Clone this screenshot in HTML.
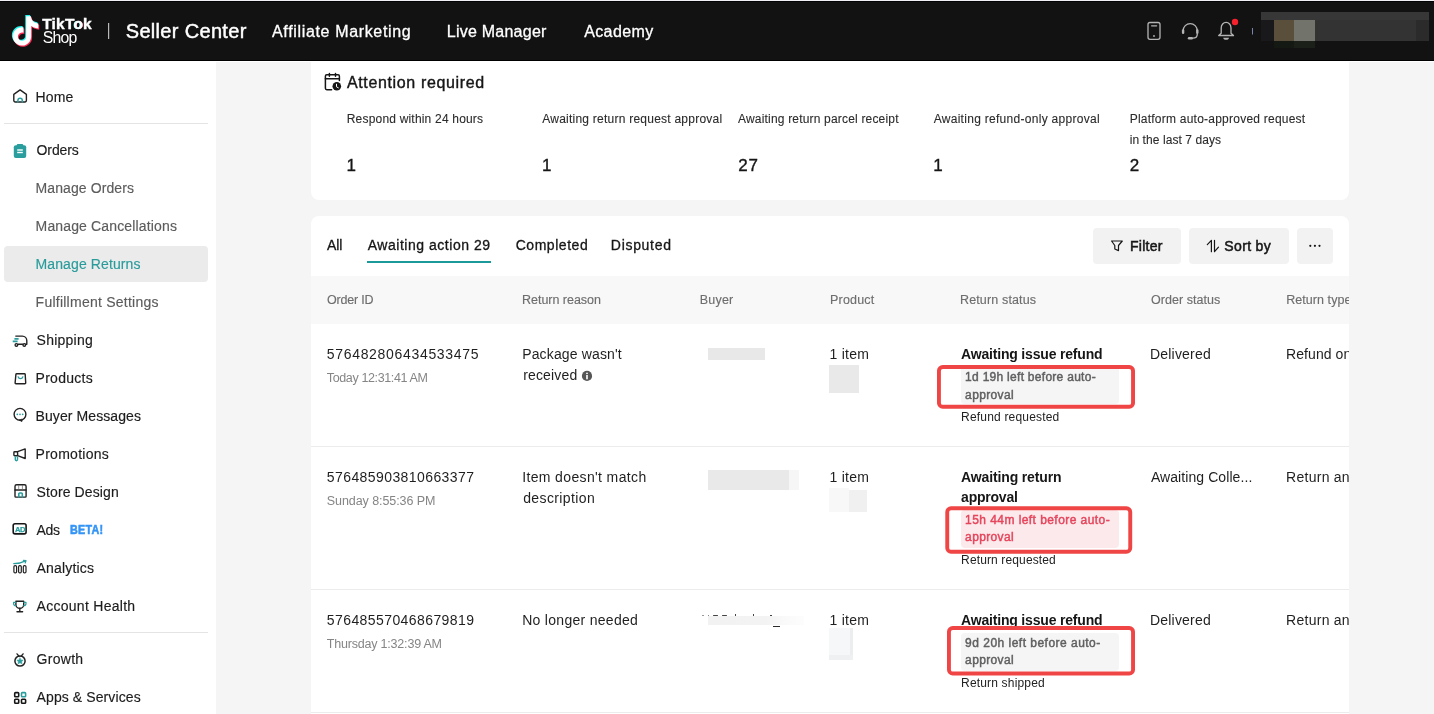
<!DOCTYPE html>
<html lang="en">
<head>
<meta charset="utf-8">
<title>Manage Returns - TikTok Shop Seller Center</title>
<style>
*{box-sizing:border-box;margin:0;padding:0}
html,body{width:1434px;height:714px;overflow:hidden}
body{background:#f5f5f5;font-family:"Liberation Sans",sans-serif;color:#1f1f1f;position:relative;font-size:14px}
.a{position:absolute}
.t{position:absolute;white-space:nowrap;line-height:20px}
#topstrip{left:0;top:0;width:1434px;height:1px;background:#eef0f3}
#header{left:0;top:1px;width:1434px;height:60px;background:#121212;border-top:1px solid #030303;border-bottom:1px solid #000}
#hline{left:0;top:61px;width:1434px;height:1px;background:#fff}
#sidebar{left:0;top:61px;width:216px;height:653px;background:#fff}
.sbdiv{position:absolute;left:4px;width:204px;height:1px;background:#e4e4e4}
#card1{left:310.8px;top:61px;width:1038.7px;height:139px;background:#fff;border-radius:0 0 8px 8px}
#card2{left:310.8px;top:216px;width:1038.7px;height:498px;background:#fff;border-radius:8px 8px 0 0}
#thead{left:310.8px;top:276px;width:1038.7px;height:47.6px;background:#f8f8f8}
.btn{position:absolute;top:228px;height:36px;background:#f2f2f2;border-radius:4px}
.rowline{position:absolute;left:310.8px;width:1038.7px;height:1px;background:#ececec}
.redbox{position:absolute;border:3.5px solid #ef4444;border-radius:6px}
.pill{position:absolute;left:961px;width:158px;height:37.5px;background:#f5f5f5;border-radius:4px}
.pill.red{background:#fce9eb}
svg{position:absolute;left:0;top:0;overflow:visible}
</style>
</head>
<body>
<div id="root" style="position:absolute;left:0;top:0;width:1434px;height:714px;will-change:transform">
<div class="a" id="topstrip"></div>
<div class="a" id="header"></div>
<div class="a" id="hline"></div>
<div class="a" id="sidebar"></div>
<div class="sbdiv" style="top:123px"></div>
<div class="sbdiv" style="top:632px"></div>
<div class="a" style="left:4px;top:246px;width:204px;height:36px;background:#ebebeb;border-radius:4px"></div>
<div class="a" id="card1"></div>
<div class="a" id="card2"></div>
<div class="a" id="thead"></div>
<div class="a" style="left:367.4px;top:261px;width:123.2px;height:2px;background:#1a9a9a"></div>
<div class="btn" style="left:1093px;width:88px"></div>
<div class="btn" style="left:1189px;width:100px"></div>
<div class="btn" style="left:1297px;width:36px"></div>
<div class="rowline" style="top:446px"></div>
<div class="rowline" style="top:589px"></div>
<div class="rowline" style="top:712px"></div>

<!-- blurred placeholders -->
<div class="a" style="left:1261px;top:12px;width:168px;height:29px;background:#333333"></div>
<div class="a" style="left:1261px;top:12px;width:168px;height:8.4px;background:#373737"></div>
<div class="a" style="left:1261px;top:20.4px;width:13px;height:20.6px;background:#19191c"></div>
<div class="a" style="left:1274px;top:20.4px;width:20px;height:20.6px;background:#5a4f3b"></div>
<div class="a" style="left:1294px;top:20.4px;width:20.6px;height:20.6px;background:#72746b"></div>
<div class="a" style="left:1274px;top:41px;width:20px;height:6.7px;background:#151914"></div>
<div class="a" style="left:1294px;top:41px;width:20.6px;height:6.7px;background:#1b2019"></div>
<div class="a" style="left:1416px;top:20.4px;width:13px;height:20.6px;background:#2b2b2b"></div>

<div class="a" style="left:708px;top:348px;width:57px;height:12px;background:#e8e8e8"></div>
<div class="a" style="left:829px;top:365px;width:30px;height:28px;background:#e9e9e9"></div>
<div class="a" style="left:708px;top:470px;width:81px;height:20px;background:#e9e9e9"></div>
<div class="a" style="left:789px;top:470px;width:10px;height:20px;background:#f6f6f6"></div>
<div class="a" style="left:829px;top:488px;width:20px;height:24px;background:#f8f8f8"></div>
<div class="a" style="left:849px;top:490px;width:18px;height:22px;background:#f0f0f0"></div>
<div class="a" style="left:707.6px;top:616px;width:96px;height:9px;background:linear-gradient(90deg,#f2f2f2 0,#f3f3f3 60%,#f9f9f9 78%,#fdfdfd 100%)"></div>
<div class="a" style="left:702px;top:614.6px;width:2px;height:1px;background:#999"></div>
<div class="a" style="left:707.6px;top:614.6px;width:1.4px;height:1px;background:#888"></div>
<div class="a" style="left:713px;top:614.7px;width:4.6px;height:1px;background:#444;border-radius:1px"></div>
<div class="a" style="left:721.6px;top:614.7px;width:5.2px;height:1px;background:#444;border-radius:1px"></div>
<div class="a" style="left:734.6px;top:614.4px;width:1.2px;height:1.4px;background:#444"></div>
<div class="a" style="left:753px;top:614.4px;width:1.2px;height:1.4px;background:#444"></div>
<div class="a" style="left:769.6px;top:614.6px;width:2.8px;height:1.2px;background:#2a2a2a;border-radius:1px"></div>
<div class="a" style="left:773px;top:625.8px;width:7px;height:1.2px;background:#2a2a2a"></div>
<div class="a" style="left:829px;top:628px;width:24px;height:32px;background:#f6f7f9"></div>
<div class="a" style="left:849.6px;top:628px;width:3.4px;height:32px;background:#ecedef"></div>
<div class="a" style="left:829px;top:654.5px;width:24px;height:5.5px;background:#eff0f2"></div>

<!-- pills + annotation boxes -->
<div class="pill" style="top:369.2px;height:34.8px;border-radius:0 0 4px 4px"></div>
<div class="pill red" style="top:510.3px;height:37.4px"></div>
<div class="pill" style="top:633px;height:37.7px"></div>

<div class="t" style="left:125.72px;top:20.87px;font-size:20px;color:#ffffff;letter-spacing:0.324px;-webkit-text-stroke:0.45px #ffffff;">Seller Center</div>
<div class="t" style="left:272.05px;top:21.96px;font-size:16px;color:#ffffff;letter-spacing:0.651px;-webkit-text-stroke:0.3px #ffffff;">Affiliate Marketing</div>
<div class="t" style="left:446.75px;top:21.96px;font-size:16px;color:#ffffff;letter-spacing:0.244px;-webkit-text-stroke:0.3px #ffffff;">Live Manager</div>
<div class="t" style="left:584.15px;top:21.96px;font-size:16px;color:#ffffff;letter-spacing:0.401px;-webkit-text-stroke:0.3px #ffffff;">Academy</div>
<div class="t" style="left:42.80px;top:27.93px;font-size:15.8px;color:#ffffff;letter-spacing:-0.836px;">Shop</div>
<div class="t" style="left:35.58px;top:86.85px;font-size:14px;color:#1c1c1c;letter-spacing:0.097px;-webkit-text-stroke:0.15px #1c1c1c;">Home</div>
<div class="t" style="left:36.58px;top:140.15px;font-size:14px;color:#1c1c1c;letter-spacing:-0.107px;-webkit-text-stroke:0.15px #1c1c1c;">Orders</div>
<div class="t" style="left:35.58px;top:177.85px;font-size:14px;color:#5c5c5c;letter-spacing:0.090px;-webkit-text-stroke:0.15px #5c5c5c;">Manage Orders</div>
<div class="t" style="left:35.58px;top:215.75px;font-size:14px;color:#5c5c5c;letter-spacing:0.148px;-webkit-text-stroke:0.15px #5c5c5c;">Manage Cancellations</div>
<div class="t" style="left:35.58px;top:253.85px;font-size:14px;color:#2a9b9b;letter-spacing:0.104px;-webkit-text-stroke:0.15px #2a9b9b;">Manage Returns</div>
<div class="t" style="left:35.58px;top:291.65px;font-size:14px;color:#5c5c5c;letter-spacing:0.246px;-webkit-text-stroke:0.15px #5c5c5c;">Fulfillment Settings</div>
<div class="t" style="left:36.58px;top:329.75px;font-size:14px;color:#1c1c1c;letter-spacing:0.235px;-webkit-text-stroke:0.15px #1c1c1c;">Shipping</div>
<div class="t" style="left:35.58px;top:367.85px;font-size:14px;color:#1c1c1c;letter-spacing:0.257px;-webkit-text-stroke:0.15px #1c1c1c;">Products</div>
<div class="t" style="left:35.58px;top:405.95px;font-size:14px;color:#1c1c1c;letter-spacing:0.083px;-webkit-text-stroke:0.15px #1c1c1c;">Buyer Messages</div>
<div class="t" style="left:35.58px;top:443.85px;font-size:14px;color:#1c1c1c;letter-spacing:0.271px;-webkit-text-stroke:0.15px #1c1c1c;">Promotions</div>
<div class="t" style="left:36.58px;top:481.95px;font-size:14px;color:#1c1c1c;letter-spacing:0.110px;-webkit-text-stroke:0.15px #1c1c1c;">Store Design</div>
<div class="t" style="left:36.58px;top:519.55px;font-size:14px;color:#1c1c1c;letter-spacing:-0.387px;-webkit-text-stroke:0.15px #1c1c1c;">Ads</div>
<div class="t" style="left:36.58px;top:557.55px;font-size:14px;color:#1c1c1c;letter-spacing:0.179px;-webkit-text-stroke:0.15px #1c1c1c;">Analytics</div>
<div class="t" style="left:36.58px;top:595.85px;font-size:14px;color:#1c1c1c;letter-spacing:0.276px;-webkit-text-stroke:0.15px #1c1c1c;">Account Health</div>
<div class="t" style="left:36.58px;top:648.95px;font-size:14px;color:#1c1c1c;letter-spacing:0.282px;-webkit-text-stroke:0.15px #1c1c1c;">Growth</div>
<div class="t" style="left:36.58px;top:687.05px;font-size:14px;color:#1c1c1c;letter-spacing:0.096px;-webkit-text-stroke:0.15px #1c1c1c;">Apps &amp; Services</div>
<div class="t" style="left:69.50px;top:519.67px;font-size:12.5px;color:#3595f6;font-weight:bold;letter-spacing:0.300px;transform-origin:0 50%;transform:scaleX(0.86);-webkit-text-stroke:0.55px #3595f6;">BETA!</div>
<div class="t" style="left:346.90px;top:72.76px;font-size:16px;color:#161616;letter-spacing:0.647px;-webkit-text-stroke:0.4px #161616;">Attention required</div>
<div class="t" style="left:346.75px;top:108.84px;font-size:12px;color:#2b2b2b;letter-spacing:0.192px;-webkit-text-stroke:0.1px #2b2b2b;">Respond within 24 hours</div>
<div class="t" style="left:542.25px;top:108.84px;font-size:12px;color:#2b2b2b;letter-spacing:0.236px;-webkit-text-stroke:0.1px #2b2b2b;">Awaiting return request approval</div>
<div class="t" style="left:738.05px;top:108.84px;font-size:12px;color:#2b2b2b;letter-spacing:0.181px;-webkit-text-stroke:0.1px #2b2b2b;">Awaiting return parcel receipt</div>
<div class="t" style="left:933.65px;top:108.84px;font-size:12px;color:#2b2b2b;letter-spacing:0.289px;-webkit-text-stroke:0.1px #2b2b2b;">Awaiting refund-only approval</div>
<div class="t" style="left:1129.65px;top:108.84px;font-size:12px;color:#2b2b2b;letter-spacing:0.234px;-webkit-text-stroke:0.1px #2b2b2b;">Platform auto-approved request</div>
<div class="t" style="left:1129.65px;top:129.84px;font-size:12px;color:#2b2b2b;letter-spacing:0.079px;-webkit-text-stroke:0.1px #2b2b2b;">in the last 7 days</div>
<div class="t" style="left:346.38px;top:155.51px;font-size:17px;color:#161616;-webkit-text-stroke:0.35px #161616;">1</div>
<div class="t" style="left:541.88px;top:155.51px;font-size:17px;color:#161616;-webkit-text-stroke:0.35px #161616;">1</div>
<div class="t" style="left:738.17px;top:155.51px;font-size:17px;color:#161616;letter-spacing:0.995px;-webkit-text-stroke:0.35px #161616;">27</div>
<div class="t" style="left:933.27px;top:155.51px;font-size:17px;color:#161616;-webkit-text-stroke:0.35px #161616;">1</div>
<div class="t" style="left:1129.77px;top:155.51px;font-size:17px;color:#161616;-webkit-text-stroke:0.35px #161616;">2</div>
<div class="t" style="left:327.05px;top:235.05px;font-size:14px;color:#161616;letter-spacing:-0.074px;-webkit-text-stroke:0.3px #161616;">All</div>
<div class="t" style="left:367.75px;top:235.05px;font-size:14px;color:#161616;letter-spacing:0.524px;-webkit-text-stroke:0.3px #161616;">Awaiting action 29</div>
<div class="t" style="left:515.65px;top:235.05px;font-size:14px;color:#161616;letter-spacing:0.548px;-webkit-text-stroke:0.3px #161616;">Completed</div>
<div class="t" style="left:610.85px;top:235.05px;font-size:14px;color:#161616;letter-spacing:0.690px;-webkit-text-stroke:0.3px #161616;">Disputed</div>
<div class="t" style="left:1130.05px;top:236.05px;font-size:14px;color:#161616;letter-spacing:0.250px;-webkit-text-stroke:0.5px #161616;">Filter</div>
<div class="t" style="left:1224.35px;top:236.05px;font-size:14px;color:#161616;letter-spacing:0.341px;-webkit-text-stroke:0.5px #161616;">Sort by</div>
<div class="t" style="left:326.97px;top:289.97px;font-size:12.5px;color:#6e6e6e;letter-spacing:-0.207px;-webkit-text-stroke:0.15px #6e6e6e;">Order ID</div>
<div class="t" style="left:522.08px;top:289.97px;font-size:12.5px;color:#6e6e6e;letter-spacing:-0.034px;-webkit-text-stroke:0.15px #6e6e6e;">Return reason</div>
<div class="t" style="left:699.68px;top:289.97px;font-size:12.5px;color:#6e6e6e;letter-spacing:0.240px;-webkit-text-stroke:0.15px #6e6e6e;">Buyer</div>
<div class="t" style="left:829.98px;top:289.97px;font-size:12.5px;color:#6e6e6e;letter-spacing:0.207px;-webkit-text-stroke:0.15px #6e6e6e;">Product</div>
<div class="t" style="left:959.98px;top:289.97px;font-size:12.5px;color:#6e6e6e;letter-spacing:0.147px;-webkit-text-stroke:0.15px #6e6e6e;">Return status</div>
<div class="t" style="left:1150.98px;top:289.97px;font-size:12.5px;color:#6e6e6e;letter-spacing:0.057px;-webkit-text-stroke:0.15px #6e6e6e;">Order status</div>
<div class="t" style="left:1286.28px;top:289.97px;font-size:12.5px;color:#6e6e6e;letter-spacing:0.050px;-webkit-text-stroke:0.15px #6e6e6e;width:63.12px;overflow:hidden;">Return type</div>
<div class="t" style="left:326.80px;top:344.25px;font-size:14px;color:#1f1f1f;letter-spacing:0.679px;">576482806434533475</div>
<div class="t" style="left:326.80px;top:367.57px;font-size:12.5px;color:#858585;letter-spacing:-0.369px;">Today 12:31:41 AM</div>
<div class="t" style="left:522.20px;top:344.25px;font-size:14px;color:#1f1f1f;letter-spacing:0.144px;">Package wasn&#x27;t</div>
<div class="t" style="left:523.20px;top:365.25px;font-size:14px;color:#1f1f1f;letter-spacing:0.153px;">received</div>
<div class="t" style="left:829.60px;top:344.25px;font-size:14px;color:#1f1f1f;letter-spacing:0.228px;">1 item</div>
<div class="t" style="left:961.10px;top:344.05px;font-size:14px;color:#161616;font-weight:bold;letter-spacing:-0.188px;">Awaiting issue refund</div>
<div class="t" style="left:965.12px;top:367.14px;font-size:12px;color:#606060;letter-spacing:0.281px;-webkit-text-stroke:0.45px #606060;">1d 19h left before auto-</div>
<div class="t" style="left:965.12px;top:384.64px;font-size:12px;color:#606060;letter-spacing:0.355px;-webkit-text-stroke:0.45px #606060;">approval</div>
<div class="t" style="left:961.10px;top:407.24px;font-size:12px;color:#222;letter-spacing:0.185px;">Refund requested</div>
<div class="t" style="left:1149.90px;top:344.25px;font-size:14px;color:#1f1f1f;letter-spacing:0.219px;">Delivered</div>
<div class="t" style="left:1286.10px;top:344.25px;font-size:14px;color:#1f1f1f;letter-spacing:0.060px;width:63.30px;overflow:hidden;">Refund only</div>
<div class="t" style="left:326.80px;top:467.05px;font-size:14px;color:#1f1f1f;letter-spacing:0.414px;">576485903810663377</div>
<div class="t" style="left:326.80px;top:490.67px;font-size:12.5px;color:#858585;letter-spacing:-0.074px;">Sunday 8:55:36 PM</div>
<div class="t" style="left:522.20px;top:467.05px;font-size:14px;color:#1f1f1f;letter-spacing:0.362px;">Item doesn&#x27;t match</div>
<div class="t" style="left:523.20px;top:488.05px;font-size:14px;color:#1f1f1f;letter-spacing:0.388px;">description</div>
<div class="t" style="left:829.60px;top:467.05px;font-size:14px;color:#1f1f1f;letter-spacing:0.228px;">1 item</div>
<div class="t" style="left:961.10px;top:466.85px;font-size:14px;color:#161616;font-weight:bold;letter-spacing:-0.140px;">Awaiting return</div>
<div class="t" style="left:961.10px;top:486.85px;font-size:14px;color:#161616;font-weight:bold;letter-spacing:-0.223px;">approval</div>
<div class="t" style="left:965.12px;top:509.94px;font-size:12px;color:#e5455c;letter-spacing:0.436px;-webkit-text-stroke:0.45px #e5455c;">15h 44m left before auto-</div>
<div class="t" style="left:965.12px;top:527.44px;font-size:12px;color:#e5455c;letter-spacing:0.355px;-webkit-text-stroke:0.45px #e5455c;">approval</div>
<div class="t" style="left:961.10px;top:550.04px;font-size:12px;color:#222;letter-spacing:0.130px;">Return requested</div>
<div class="t" style="left:1150.90px;top:467.05px;font-size:14px;color:#1f1f1f;letter-spacing:0.079px;">Awaiting Colle...</div>
<div class="t" style="left:1286.10px;top:467.05px;font-size:14px;color:#1f1f1f;letter-spacing:0.260px;width:63.30px;overflow:hidden;">Return and refund</div>
<div class="t" style="left:326.80px;top:610.05px;font-size:14px;color:#1f1f1f;letter-spacing:0.414px;">576485570468679819</div>
<div class="t" style="left:326.80px;top:633.67px;font-size:12.5px;color:#858585;letter-spacing:-0.200px;">Thursday 1:32:39 AM</div>
<div class="t" style="left:522.20px;top:610.05px;font-size:14px;color:#1f1f1f;letter-spacing:0.292px;">No longer needed</div>
<div class="t" style="left:829.60px;top:610.05px;font-size:14px;color:#1f1f1f;letter-spacing:0.228px;">1 item</div>
<div class="t" style="left:961.10px;top:609.85px;font-size:14px;color:#161616;font-weight:bold;letter-spacing:-0.188px;">Awaiting issue refund</div>
<div class="t" style="left:965.12px;top:632.94px;font-size:12px;color:#606060;letter-spacing:0.481px;-webkit-text-stroke:0.45px #606060;">9d 20h left before auto-</div>
<div class="t" style="left:965.12px;top:650.44px;font-size:12px;color:#606060;letter-spacing:0.355px;-webkit-text-stroke:0.45px #606060;">approval</div>
<div class="t" style="left:961.10px;top:673.04px;font-size:12px;color:#222;letter-spacing:0.168px;">Return shipped</div>
<div class="t" style="left:1149.90px;top:610.05px;font-size:14px;color:#1f1f1f;letter-spacing:0.219px;">Delivered</div>
<div class="t" style="left:1286.10px;top:610.05px;font-size:14px;color:#1f1f1f;letter-spacing:0.260px;width:63.30px;overflow:hidden;">Return and refund</div>

<svg width="1434" height="714" viewBox="0 0 1434 714" fill="none" stroke="#f04545" stroke-width="3.9">
<rect x="938.95" y="366.95" width="194.1" height="39.8" rx="3.8"/>
<rect x="947.25" y="508.25" width="183" height="43.5" rx="3.8"/>
<rect x="948.95" y="627.95" width="184.1" height="45.6" rx="3.8"/>
</svg>

<!--ICONS_START-->
<svg width="1434" height="714" viewBox="0 0 1434 714" fill="none" stroke-linecap="round" stroke-linejoin="round">

<!-- logo -->
<g stroke="none">
<path d="M12.525.02c1.31-.02 2.61-.01 3.91-.02.08 1.53.63 3.09 1.75 4.17 1.12 1.11 2.7 1.62 4.24 1.79v4.03c-1.44-.05-2.89-.35-4.2-.97-.57-.26-1.1-.59-1.62-.93-.01 2.92.01 5.84-.02 8.75-.08 1.4-.54 2.79-1.35 3.94-1.31 1.92-3.58 3.17-5.91 3.21-1.43.08-2.86-.31-4.08-1.03-2.02-1.19-3.44-3.37-3.65-5.71-.02-.5-.03-1-.01-1.49.18-1.9 1.12-3.72 2.58-4.96 1.66-1.44 3.98-2.13 6.15-1.72.02 1.48-.04 2.96-.04 4.44-.99-.32-2.15-.23-3.02.37-.63.41-1.11 1.04-1.36 1.75-.21.51-.15 1.07-.14 1.61.24 1.64 1.82 3.02 3.5 2.87 1.12-.01 2.19-.66 2.77-1.61.19-.33.4-.67.41-1.06.1-1.79.06-3.57.07-5.36.01-4.03-.01-8.05.02-12.07z" fill="#25f4ee" transform="translate(9.97 15) scale(1.225)"/>
<path d="M12.525.02c1.31-.02 2.61-.01 3.91-.02.08 1.53.63 3.09 1.75 4.17 1.12 1.11 2.7 1.62 4.24 1.79v4.03c-1.44-.05-2.89-.35-4.2-.97-.57-.26-1.1-.59-1.62-.93-.01 2.92.01 5.84-.02 8.75-.08 1.4-.54 2.79-1.35 3.94-1.31 1.92-3.58 3.17-5.91 3.21-1.43.08-2.86-.31-4.08-1.03-2.02-1.19-3.44-3.37-3.65-5.71-.02-.5-.03-1-.01-1.49.18-1.9 1.12-3.72 2.58-4.96 1.66-1.44 3.98-2.13 6.15-1.72.02 1.48-.04 2.96-.04 4.44-.99-.32-2.15-.23-3.02.37-.63.41-1.11 1.04-1.36 1.75-.21.51-.15 1.07-.14 1.61.24 1.64 1.82 3.02 3.5 2.87 1.12-.01 2.19-.66 2.77-1.61.19-.33.4-.67.41-1.06.1-1.79.06-3.57.07-5.36.01-4.03-.01-8.05.02-12.07z" fill="#fe2c55" transform="translate(11.77 17.4) scale(1.225)"/>
<path d="M12.525.02c1.31-.02 2.61-.01 3.91-.02.08 1.53.63 3.09 1.75 4.17 1.12 1.11 2.7 1.62 4.24 1.79v4.03c-1.44-.05-2.89-.35-4.2-.97-.57-.26-1.1-.59-1.62-.93-.01 2.92.01 5.84-.02 8.75-.08 1.4-.54 2.79-1.35 3.94-1.31 1.92-3.58 3.17-5.91 3.21-1.43.08-2.86-.31-4.08-1.03-2.02-1.19-3.44-3.37-3.65-5.71-.02-.5-.03-1-.01-1.49.18-1.9 1.12-3.72 2.58-4.96 1.66-1.44 3.98-2.13 6.15-1.72.02 1.48-.04 2.96-.04 4.44-.99-.32-2.15-.23-3.02.37-.63.41-1.11 1.04-1.36 1.75-.21.51-.15 1.07-.14 1.61.24 1.64 1.82 3.02 3.5 2.87 1.12-.01 2.19-.66 2.77-1.61.19-.33.4-.67.41-1.06.1-1.79.06-3.57.07-5.36.01-4.03-.01-8.05.02-12.07z" fill="#ffffff" transform="translate(10.87 16.2) scale(1.225)"/>
</g>
<rect x="108" y="23" width="1.2" height="16" fill="#b9b9b9" stroke="none"/>
<!-- header right icons -->
<g stroke="#b4b4b4" stroke-width="1.3">
<rect x="1148" y="22.5" width="12" height="16.8" rx="2"/>
<path d="M1151.6 25.8H1156.6"/>
<circle cx="1154" cy="36" r="0.9" fill="#b4b4b4" stroke="none"/>
<path d="M1183.2 31V30.6a7 7 0 0 1 14 0V31"/>
<rect x="1181.9" y="29.2" width="2.4" height="4.8" rx="1.2" fill="#b4b4b4" stroke="none"/>
<rect x="1196.1" y="29.2" width="2.4" height="4.8" rx="1.2" fill="#b4b4b4" stroke="none"/>
<path d="M1197.3 34c0 3-2.4 4.2-4.6 4.2"/>
<rect x="1187.8" y="37" width="5.2" height="2.4" rx="1.2" fill="#b4b4b4" stroke="none"/>
<path d="M1218.7 35.5L1221.2 33.3V27.9a4.9 5.5 0 0 1 9.8 0V33.3L1233.5 35.5Z"/>
<path d="M1223.3 37.7a2.8 2 0 0 0 5.6 0Z" fill="#b4b4b4" stroke="none"/>
</g>
<circle cx="1235" cy="22" r="3.2" fill="#f5222d"/>
<rect x="1252" y="28" width="1" height="6.5" fill="#7d84aa"/>

<!-- sidebar icons -->
<g stroke="#222" stroke-width="1.4">
<!-- home -->
<path d="M13.8 94.4L20.1 89.9L26.4 94.4V100.6a1.4 1.4 0 0 1-1.4 1.4H15.2a1.4 1.4 0 0 1-1.4-1.4Z"/>
<path d="M17.9 102.1V100.5a2.2 2.2 0 0 1 4.4 0V102.1" stroke="#2a9d9d" stroke-width="1.5"/>
<!-- orders -->
<g stroke="none" fill="#2a9d9d"><rect x="13.8" y="145.2" width="12.4" height="12.7" rx="2"/><rect x="16.8" y="143.9" width="6.4" height="3.4" rx="1"/></g>
<g stroke="none" fill="#fff"><rect x="17.2" y="149.3" width="5.6" height="1.4"/><rect x="17.2" y="151.8" width="5.6" height="1.4"/></g>
<!-- shipping -->
<path d="M15.8 336.1H22.3c2.6 0 4.5 2 4.5 4.6V344.2H26M22.5 344.2H18.2"/>
<circle cx="16.4" cy="344.9" r="1.3"/><circle cx="24.3" cy="344.9" r="1.3"/>
<path d="M14.4 338.9H18.6M12.7 341.4H17.6" stroke="#2a9d9d" stroke-width="1.6" stroke-linecap="butt"/>
<!-- products -->
<path d="M16.7 373.7H24.4a.8 .8 0 0 1 .8 .7L25.7 383a.8 .8 0 0 1-.8 .8H15.9a.8 .8 0 0 1-.8-.8L15.9 374.4a.8 .8 0 0 1 .8-.7Z"/>
<path d="M18.2 376.9a2.4 2.4 0 0 0 4.6 0" stroke="#2a9d9d"/>
<!-- buyer messages -->
<circle cx="20" cy="414.3" r="5.9"/>
<path d="M19.3 420.1L21.9 421.7L22.2 419.4Z" fill="#222" stroke-width="0.6"/>
<g fill="#2a9d9d" stroke="none"><circle cx="17.3" cy="414.3" r="0.85"/><circle cx="20" cy="414.3" r="0.85"/><circle cx="22.7" cy="414.3" r="0.85"/></g>
<!-- promotions -->
<path d="M17.6 451.7H14.6a.7 .7 0 0 0-.7 .7V455a.7 .7 0 0 0 .7 .7H17.6M17.6 451.7L25.2 448.9V458.5L17.6 455.7Z"/>
<path d="M15.3 457V459.6a1.1 1.1 0 0 0 2.2 0V457" stroke="#2a9d9d"/>
<!-- store -->
<path d="M15 490V496.2a.9 .9 0 0 0 .9 .9H25.2a.9 .9 0 0 0 .9-.9V490"/>
<path d="M15 490V486.4a1.6 1.6 0 0 1 1.6-1.6H24.5a1.6 1.6 0 0 1 1.6 1.6V490Z"/>
<path d="M18.7 485.4V489.6M22.4 485.4V489.6" stroke-width="0.7" stroke="#666"/>
<path d="M18.8 497V493.9a.9 .9 0 0 1 .9-.9H21.4a.9 .9 0 0 1 .9 .9V497" stroke="#2a9d9d" stroke-width="1.6"/>
<!-- ads -->
<rect x="13.2" y="523.7" width="12.9" height="10.2" rx="1.8" stroke-width="1.6" stroke="#161616"/>
<!-- analytics -->
<rect x="13.9" y="565.6" width="2.7" height="7.3" rx="1.2" stroke-width="1.2"/>
<rect x="18.6" y="565.6" width="2.7" height="7.3" rx="1.2" stroke-width="1.2"/>
<rect x="23.3" y="565.6" width="2.7" height="7.3" rx="1.2" stroke-width="1.2"/>
<path d="M13.7 563.6C18 563.6 22 562.8 25.6 560.9M23.4 560.4L26 560.7L25.2 563" stroke="#2a9d9d" stroke-width="1.2"/>
<!-- account health -->
<path d="M15.9 601.3H23.7V604.4a3.9 3.9 0 0 1-7.8 0Z"/>
<path d="M19.8 608.4V611.5M17 611.7H22.6"/>
<path d="M15.7 602.4H13.6V603.4a2.2 2.2 0 0 0 2.2 2.2M23.9 602.4H26V603.4a2.2 2.2 0 0 1-2.2 2.2" stroke="#2a9d9d" stroke-width="1.2"/>
<!-- growth -->
<circle cx="20" cy="661" r="5.1" stroke-width="1.5"/>
<path d="M17 653.9L19 656.2M23.100000000000001 653.9L21.1 656.2"/>
<path d="M20 657.9l1 2 2.2.3-1.6 1.5.4 2.2-2-1.1-2 1.1.4-2.2-1.6-1.5 2.2-.3Z" fill="#2a9d9d" stroke="#2a9d9d" stroke-width="0.5"/>
<!-- apps -->
<g stroke="#161616" stroke-width="1.6"><rect x="14.7" y="692.6" width="4" height="4.1" rx="0.8"/>
<rect x="21.5" y="692.6" width="4.1" height="4.1" rx="0.8" stroke="#2a9d9d"/>
<rect x="14.7" y="699.3" width="4" height="4" rx="0.8"/>
<rect x="21.5" y="699.3" width="4.1" height="4" rx="0.8"/></g>
</g>
<text x="14.9" y="531.6" font-family="Liberation Sans, sans-serif" font-weight="bold" font-size="7.6px" fill="#2a9d9d" stroke="#2a9d9d" stroke-width="0.25" letter-spacing="-0.35">AD</text>

<!-- calendar -->
<g stroke="#161616" stroke-width="1.5">
<path d="M331.6 89.7H326.8a1.4 1.4 0 0 1-1.4-1.4V76.2a1.4 1.4 0 0 1 1.4-1.4H338a1.4 1.4 0 0 1 1.4 1.4V80.4"/>
<path d="M325.4 78.7H339.4"/>
<path d="M329.4 73.4V76.2M335.5 73.4V76.2"/>
<circle cx="336.8" cy="86.2" r="4.3" fill="#161616" stroke="none"/>
<path d="M336.5 84.2V86.8L338.3 87.8" stroke="#fff" stroke-width="1"/>
</g>
<!-- filter / sort / dots -->
<g stroke="#161616" stroke-width="1.2">
<path d="M1111.6 241H1122.3L1118.5 245.5V250.6L1114.8 249V245.5Z"/>
<path d="M1211.4 251.7V240.3L1207.3 244.6M1214.5 240.3V251.7L1218.5 247.2"/>
</g>
<g fill="#161616" stroke="none"><circle cx="1310.3" cy="245.8" r="1.1"/><circle cx="1314.9" cy="245.8" r="1.1"/><circle cx="1319.5" cy="245.8" r="1.1"/></g>
<!-- info -->
<circle cx="587" cy="375.9" r="5.1" fill="#565656"/>
<rect x="586.2" y="372.7" width="1.6" height="1.3" fill="#fff"/>
<rect x="586.2" y="374.9" width="1.6" height="4.4" fill="#fff"/>
</svg>
<div class="t" style="left:42.2px;top:13.9px;font-size:15.5px;font-weight:bold;color:#fff;letter-spacing:0.2px;-webkit-text-stroke:0.4px #fff">TikT<span style="text-shadow:-0.5px -0.4px 0 #25f4ee,0.5px 0.4px 0 #fe2c55">o</span>k</div>

<!--ICONS_END-->
</div>
</body>
</html>
